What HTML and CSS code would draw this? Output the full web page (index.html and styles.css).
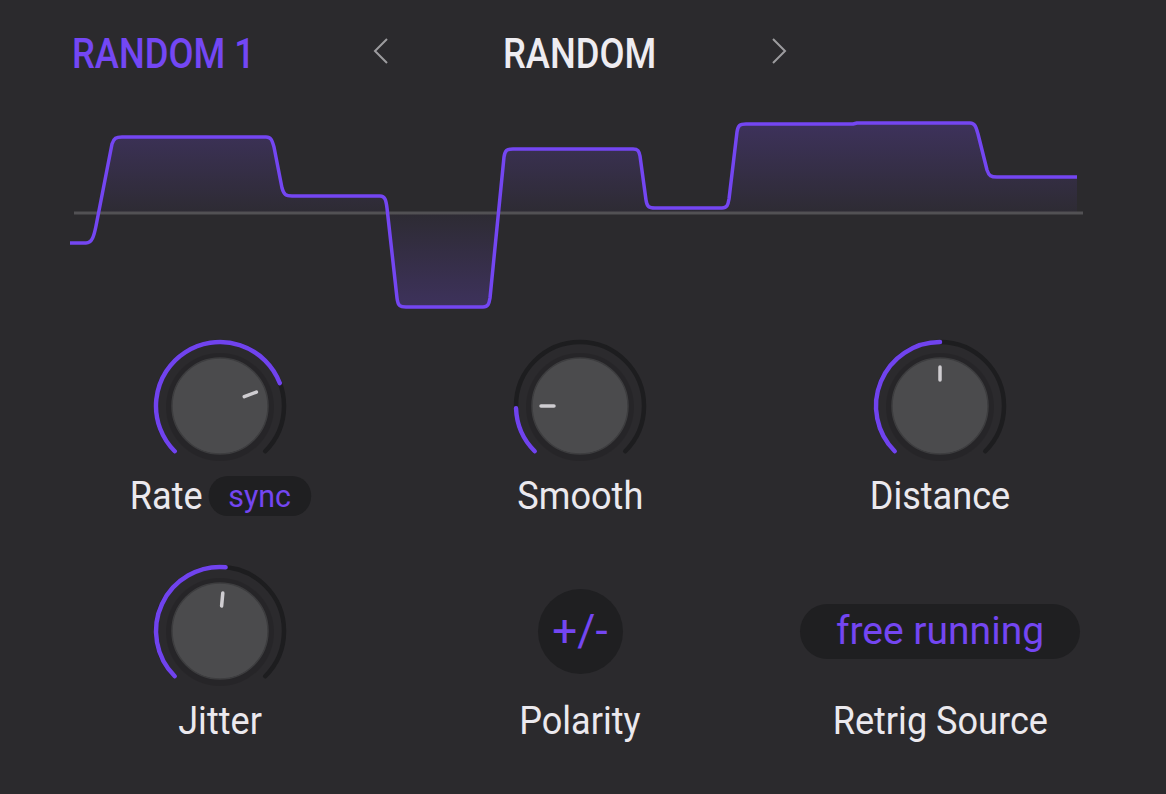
FILE: index.html
```html
<!DOCTYPE html>
<html lang="en">
<head>
    <meta charset="UTF-8">
    <meta name="viewport" content="width=device-width, initial-scale=1.0">
    <title>Random 1</title>
    <link rel="stylesheet" href="styles.css">
</head>
<body>
    <div class="panel">
        <div class="header">
            <div class="module-name"><span class="narrow">RANDOM 1</span></div>
            <svg class="chevron" width="18" height="28" viewBox="0 0 18 28">
                <polyline points="15,2 3,14 15,26" />
            </svg>
            <div class="type-name"><span class="narrow">RANDOM</span></div>
            <svg class="chevron" width="18" height="28" viewBox="0 0 18 28">
                <polyline points="3,2 15,14 3,26" />
            </svg>
        </div>

        <!-- waveform preview, drawn in page coordinates -->
        <svg class="wave" width="1166" height="220" viewBox="0 100 1166 220">
            <defs>
                <linearGradient id="waveFill" gradientUnits="userSpaceOnUse" x1="0" y1="120" x2="0" y2="310">
                    <stop offset="0" stop-color="#7a4cf5" stop-opacity="0.24" />
                    <stop offset="0.49" stop-color="#7a4cf5" stop-opacity="0.03" />
                    <stop offset="1" stop-color="#7a4cf5" stop-opacity="0.24" />
                </linearGradient>
            </defs>
            <path class="wave-fill" d="M98.5 213 L112 144 C114 138 116 137 122 137 H266 C271 137 272 140 274 147 L282 188 C284 195 286 196 292 196 H380 C385 196 386 200 387 208 L397 298 C398 306 400 307 406 307 H483 C488 307 489 304 490 298 L504 157 C505 150 507 149 513 149 H633 C638 149 639 151 640 156 L646 200 C647 207 649 208 655 208 H722 C727 208 728 205 729 199 L737 132 C738 125 740 124 746 124 H853 L857 123 H970 C975 123 976 127 978 134 L987 170 C989 176 991 177 997 177 H1077 V213 Z" />
            <line class="wave-axis" x1="74" y1="213" x2="1083" y2="213" />
            <path class="wave-line" d="M70 243 H86 C92 243 94 236 96 226 L112 144 C114 138 116 137 122 137 H266 C271 137 272 140 274 147 L282 188 C284 195 286 196 292 196 H380 C385 196 386 200 387 208 L397 298 C398 306 400 307 406 307 H483 C488 307 489 304 490 298 L504 157 C505 150 507 149 513 149 H633 C638 149 639 151 640 156 L646 200 C647 207 649 208 655 208 H722 C727 208 728 205 729 199 L737 132 C738 125 740 124 746 124 H853 L857 123 H970 C975 123 976 127 978 134 L987 170 C989 176 991 177 997 177 H1077" />
        </svg>

        <div class="controls">
            <!-- Rate -->
            <div class="cell">
                <div class="ctrl">
                    <svg class="knob" width="140" height="140" viewBox="0 0 140 140">
                        <path class="track" d="M24.75 115.25 A64 64 0 1 1 115.25 115.25" />
                        <path class="value" d="M24.75 115.25 A64 64 0 1 1 129.75 47.06" />
                        <circle class="halo" cx="70" cy="71" r="54" />
                        <circle class="body" cx="70" cy="70" r="48" />
                        <line class="pointer" x1="94.27" y1="60.68" x2="106.41" y2="56.02" />
                    </svg>
                </div>
                <div class="label label-row">Rate <span class="pill sync">sync</span></div>
            </div>
            <!-- Smooth -->
            <div class="cell">
                <div class="ctrl">
                    <svg class="knob" width="140" height="140" viewBox="0 0 140 140">
                        <path class="track" d="M24.75 115.25 A64 64 0 1 1 115.25 115.25" />
                        <path class="value" d="M24.75 115.25 A64 64 0 0 1 6.04 72.23" />
                        <circle class="halo" cx="70" cy="71" r="54" />
                        <circle class="body" cx="70" cy="70" r="48" />
                        <line class="pointer" x1="44" y1="70" x2="31" y2="70" />
                    </svg>
                </div>
                <div class="label">Smooth</div>
            </div>
            <!-- Distance -->
            <div class="cell">
                <div class="ctrl">
                    <svg class="knob" width="140" height="140" viewBox="0 0 140 140">
                        <path class="track" d="M24.75 115.25 A64 64 0 1 1 115.25 115.25" />
                        <path class="value" d="M24.75 115.25 A64 64 0 0 1 70 6" />
                        <circle class="halo" cx="70" cy="71" r="54" />
                        <circle class="body" cx="70" cy="70" r="48" />
                        <line class="pointer" x1="70" y1="44" x2="70" y2="31" />
                    </svg>
                </div>
                <div class="label">Distance</div>
            </div>
            <!-- Jitter -->
            <div class="cell">
                <div class="ctrl">
                    <svg class="knob" width="140" height="140" viewBox="0 0 140 140">
                        <path class="track" d="M24.75 115.25 A64 64 0 1 1 115.25 115.25" />
                        <path class="value" d="M24.75 115.25 A64 64 0 0 1 75.58 6.24" />
                        <circle class="halo" cx="70" cy="71" r="54" />
                        <circle class="body" cx="70" cy="70" r="48" />
                        <line class="pointer" x1="71.6" y1="45" x2="72.8" y2="32" />
                    </svg>
                </div>
                <div class="label">Jitter</div>
            </div>
            <!-- Polarity -->
            <div class="cell">
                <div class="ctrl">
                    <div class="round-btn">+/-</div>
                </div>
                <div class="label">Polarity</div>
            </div>
            <!-- Retrig Source -->
            <div class="cell">
                <div class="ctrl">
                    <div class="pill retrig">free running</div>
                </div>
                <div class="label">Retrig Source</div>
            </div>
        </div>
    </div>
</body>
</html>
```

FILE: styles.css
```css
body {
    margin: 0;
    background-color: #2b2a2d;
    font-family: Roboto, "Noto Sans", sans-serif;
    color: #ebe9ee;
}
.panel {
    width: 1166px;
    height: 794px;
    overflow: hidden;
}
.header {
    box-sizing: border-box;
    height: 100px;
    padding: 6px 0 0 72px;
    display: flex;
    align-items: center;
}
.narrow {
    display: inline-block;
    transform: scaleX(0.865);
}
.module-name {
    width: 300px;
    font-size: 42px;
    font-weight: 500;
    color: #7447f4;
}
.module-name .narrow {
    transform-origin: left center;
}
.type-name {
    width: 380px;
    text-align: center;
    font-size: 42px;
    font-weight: 500;
    color: #eeecf1;
}
.chevron {
    margin-top: -4px;
}
.chevron polyline {
    fill: none;
    stroke: #9d9c9f;
    stroke-width: 2;
}
.wave {
    display: block;
}
.wave-fill {
    fill: url(#waveFill);
    stroke: none;
}
.wave-axis {
    stroke: #525154;
    stroke-width: 3;
}
.wave-line {
    fill: none;
    stroke: #7446f2;
    stroke-width: 3.5;
    stroke-linejoin: round;
}
.controls {
    display: grid;
    grid-template-columns: repeat(3, 360px);
    row-gap: 45px;
    padding-left: 40px;
    margin-top: 16px;
}
.cell {
    display: flex;
    flex-direction: column;
    align-items: center;
}
.ctrl {
    height: 140px;
    display: flex;
    align-items: center;
    justify-content: center;
}
.label {
    height: 40px;
    line-height: 40px;
    font-size: 38px;
    white-space: nowrap;
    transform: scaleX(0.95);
}
.label-row {
    display: flex;
    align-items: center;
    gap: 6px;
}
.knob .track {
    fill: none;
    stroke: #1d1d1f;
    stroke-width: 4.5;
    stroke-linecap: round;
}
.knob .value {
    fill: none;
    stroke: #7043ee;
    stroke-width: 4.5;
    stroke-linecap: round;
}
.knob .halo {
    fill: #252427;
    opacity: 0.7;
}
.knob .body {
    fill: #4b4b4d;
    stroke: #3d3d3f;
    stroke-width: 1.5;
}
.knob .pointer {
    stroke: #cfcdd1;
    stroke-width: 3.5;
    stroke-linecap: round;
}
.pill {
    background-color: #1f1f21;
    color: #7446f2;
    text-align: center;
}
.sync {
    height: 40px;
    line-height: 40px;
    padding: 0 21px;
    border-radius: 20px;
    font-size: 32px;
}
.retrig {
    width: 280px;
    height: 55px;
    line-height: 55px;
    border-radius: 28px;
    font-size: 39px;
}
.round-btn {
    width: 85px;
    height: 85px;
    border-radius: 50%;
    background-color: #1f1f21;
    color: #7446f2;
    font-size: 44px;
    display: flex;
    align-items: center;
    justify-content: center;
}
```
